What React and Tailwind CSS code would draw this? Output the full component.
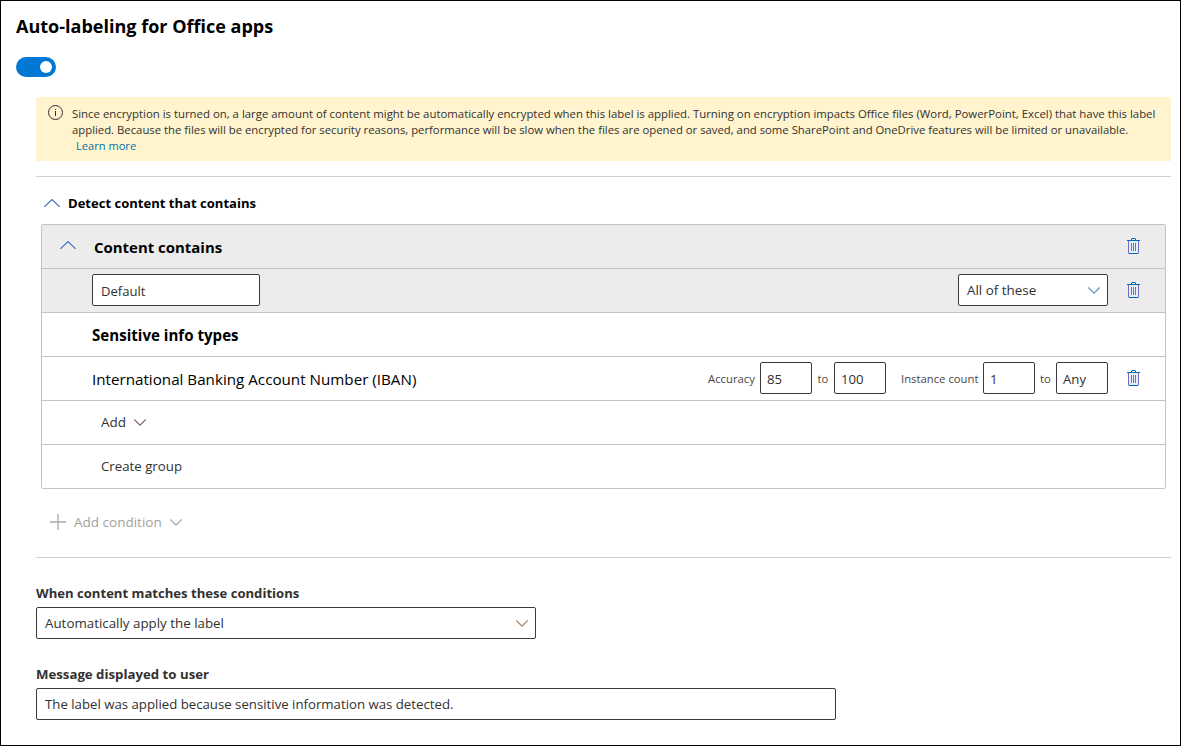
const INPUT =
  "flex items-center rounded-[2px] border border-[#3b3a39] bg-white text-[#323130]";

function ChevronUp({ className = "" }) {
  return (
    <svg className={`h-2 w-4 shrink-0 ${className}`} viewBox="0 0 16 8" fill="none" stroke="#3b6fc4" strokeWidth="1.1">
      <path d="M0.3 8 8 0.5 15.7 8" />
    </svg>
  );
}

function ChevronDown({ className = "" }) {
  return (
    <svg className={`h-[7px] w-3 shrink-0 ${className}`} viewBox="0 0 12 7" fill="none" stroke="currentColor" strokeWidth="1.1">
      <path d="M0.3 0.4 6 6.2 11.7 0.4" />
    </svg>
  );
}

function Trash() {
  return (
    <svg className="-mt-px mr-[25px] h-4 w-[13px] shrink-0" viewBox="0 0 13 16" fill="none" strokeWidth="1">
      <rect x="2" y="3" width="9" height="12" fill="#e3f1f6" />
      <path d="M1.5 3V15.5M11.5 3V15.5" stroke="#7668c8" />
      <path d="M4.5 5V13M6.5 5V13M8.5 5V13" stroke="#5b78c4" />
      <path d="M4.5 2.5V1Q4.5 .5 5 .5H8Q8.5 .5 8.5 1V2.5M0 2.5H13M2 15.5H11" stroke="#0067b8" />
    </svg>
  );
}

function Row({ className = "", children }) {
  return <div className={`flex h-11 items-center border-b border-[#c3c3c3] ${className}`}>{children}</div>;
}

function SmallBox({ value, className = "" }) {
  return <div className={`${INPUT} -mt-px h-8 w-[52px] pt-[3px] pl-1.5 text-[13.2px] ${className}`}>{value}</div>;
}

export default function App() {
  return (
    <div className="h-[746px] w-[1181px] border border-black bg-white pr-[9px] pl-[15px] font-['Open_Sans','Noto_Sans',sans-serif] whitespace-nowrap text-black">
      <h1 className="pt-3 text-[18.03px] leading-[27px] font-bold">Auto-labeling for Office apps</h1>
      <div className="mt-[17px] flex h-5 w-10 items-center justify-end rounded-full bg-[#0078d4] pr-1">
        <span className="size-3 rounded-full bg-white" />
      </div>

      <div className="pl-5">
        <div className="mt-5 flex h-16 bg-[#fff4ce] pt-2 pl-3 leading-4 text-[#323130]">
          <svg className="h-[15px] w-[15px] shrink-0" viewBox="0 0 15 15" fill="none" stroke="#323130" strokeWidth="1">
            <circle cx="7.5" cy="7.5" r="7" />
            <path d="M7.5 6V11M7.5 4V5" />
          </svg>
          <div className="mt-px ml-[9px]">
            <p className="text-[11.38px]">
              Since encryption is turned on, a large amount of content might be automatically encrypted when this label is
              applied. Turning on encryption impacts Office files (Word, PowerPoint, Excel) that have this label
            </p>
            <p className="text-[11.32px]">
              applied. Because the files will be encrypted for security reasons, performance will be slow when the files
              are opened or saved, and some SharePoint and OneDrive features will be limited or unavailable.
            </p>
            <a className="ml-1 block text-[11.1px] text-[#0072a8]">Learn more</a>
          </div>
        </div>

        <div className="mt-[15px] h-px bg-[#d2d0ce]" />

        <div className="mt-4 flex h-5 items-center pl-2">
          <ChevronUp />
          <h2 className="ml-2 text-[13.05px] leading-5 font-bold">Detect content that contains</h2>
        </div>

        <div className="mt-[11px] mr-[5px] ml-[5px] rounded-[2px] border border-[#c3c3c3]">
          <Row className="bg-[#ececec] pl-[18px]">
            <ChevronUp className="-mt-[3px]" />
            <h3 className="mt-0.5 ml-[18px] flex-1 text-[14.95px] font-bold">Content contains</h3>
            <Trash />
          </Row>
          <Row className="bg-[#ececec] pl-[50px]">
            <div className={`${INPUT} -mt-px h-8 w-[168px] pt-[3px] pl-2 text-[13.1px]`}>Default</div>
            <div className={`${INPUT} -mt-px mr-[19px] ml-auto h-8 w-[150px] justify-between pr-[7px] pl-2 text-[13.4px]`}>
              <span className="mt-px">All of these</span>
              <ChevronDown className="text-[#5f93b8]" />
            </div>
            <Trash />
          </Row>
          <Row className="pl-[50px]">
            <h3 className="mt-0.5 text-[15.1px] font-bold">Sensitive info types</h3>
          </Row>
          <Row className="pl-[50px]">
            <span className="mt-0.5 flex-1 text-[15.2px]">International Banking Account Number (IBAN)</span>
            <div className="flex items-center text-[11.3px] text-[#484644]">
              <span className="mt-px w-[52px]">Accuracy</span>
              <SmallBox value="85" />
              <span className="mt-px w-[22px] text-center">to</span>
              <SmallBox value="100" />
              <span className="mt-px ml-[15px] w-[82px]">Instance count</span>
              <SmallBox value="1" />
              <span className="mt-px w-[21px] text-center">to</span>
              <SmallBox value="Any" className="mr-[19px]" />
            </div>
            <Trash />
          </Row>
          <Row className="pl-[59px] text-[13.5px] text-[#323130]">
            Add
            <ChevronDown className="ml-2 text-[#85606c]" />
          </Row>
          <div className="flex h-[43px] items-center pl-[59px] text-[13.25px] text-[#323130]">Create group</div>
        </div>

        <div className="mt-[23px] flex h-5 items-center pl-3.5 text-[13.5px] text-[#a19f9d]">
          <svg className="h-4 w-4 shrink-0" viewBox="0 0 16 16" fill="none" stroke="#a6a9b0" strokeWidth="1.3">
            <path d="M0 8H16M8 0V16" />
          </svg>
          <span className="ml-2">Add condition</span>
          <ChevronDown className="ml-2 text-[#a0a8ae]" />
        </div>

        <div className="mt-[25px] h-px bg-[#d2d0ce]" />

        <p className="mt-[25px] text-[13.1px] leading-5 font-bold text-[#323130]">When content matches these conditions</p>
        <div className={`${INPUT} mt-1 h-8 w-[500px] justify-between pr-[7px] pl-2 text-[13.35px]`}>
          Automatically apply the label
          <ChevronDown className="text-[#a5815c]" />
        </div>

        <p className="mt-[25px] text-[13.22px] leading-5 font-bold text-[#323130]">Message displayed to user</p>
        <div className={`${INPUT} mt-1 h-8 w-[800px] pt-0.5 pl-2 text-[13.22px]`}>
          The label was applied because sensitive information was detected.
        </div>
      </div>
    </div>
  );
}
